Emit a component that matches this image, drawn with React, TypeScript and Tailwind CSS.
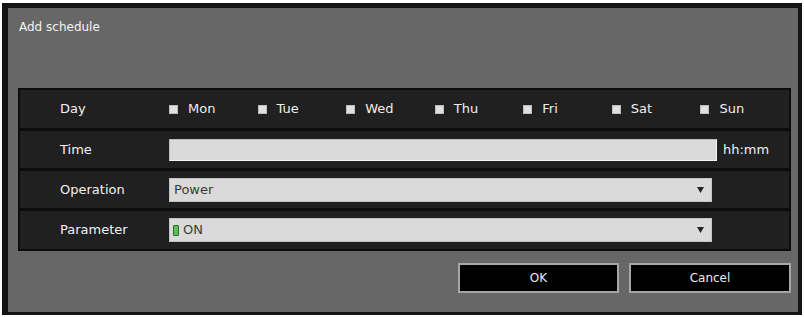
import { ReactNode } from "react";

const DAYS = ["Mon", "Tue", "Wed", "Thu", "Fri", "Sat", "Sun"];

function Row({ label, h, children }: { label: string; h: string; children: ReactNode }) {
    return (
        <div className={`flex items-center bg-[#202020] ${h}`}>
            <div className="w-[149px] shrink-0 pl-[40px] text-[13px] text-[#f2f2f2]">{label}</div>
            <div className="flex flex-1 items-center">{children}</div>
        </div>
    );
}

function Arrow() {
    return (
        <svg width="7" height="6" viewBox="0 0 7 6" className="ml-auto mr-[7px]">
            <path d="M0 0 L7 0 L3.5 6 Z" fill="#222" />
        </svg>
    );
}

export default function App() {
    return (
        <div
            className="h-[317px] w-[804px] bg-white pl-[2px] pt-[3px]"
            style={{ fontFamily: '"DejaVu Sans", Verdana, sans-serif' }}
        >
            <div className="flex h-[312px] w-[800px] flex-col border-solid border-[#141414] border-b-[3px] border-l-[6px] border-r-[4px] border-t-[5px] bg-[#676767]">
                <div className="pl-[11px] pt-[12px] text-[12px] leading-[14px] text-[#f4f4f4]">Add schedule</div>

                <div className="ml-[10px] mr-[7px] mt-[54px] flex flex-col gap-[3px] bg-[#0c0c0c] p-[2px]">
                    <Row label="Day" h="h-[38px]">
                        <div className="grid flex-1 grid-cols-7">
                            {DAYS.map((d) => (
                                <div key={d} className="flex items-center gap-[10px]">
                                    <span className="h-[9px] w-[9px] border border-[#bdbdbd] bg-[#e0e0e0]" />
                                    <span className="text-[13px] text-[#eeeeee]">{d}</span>
                                </div>
                            ))}
                        </div>
                    </Row>
                    <Row label="Time" h="h-[37px]">
                        <div className="h-[22px] w-[548px] border border-[#bcbcbc] border-b-[#f4f4f4] border-r-[#f4f4f4] bg-[#dadada]" />
                        <span className="ml-[6px] text-[13px] text-[#f2f2f2]">hh:mm</span>
                    </Row>
                    <Row label="Operation" h="h-[37px]">
                        <div className="flex h-[24px] w-[543px] items-center border border-[#c4c4c4] bg-[#dadada] pl-[4px] text-[13px] text-[#3a3a3a]">
                            Power
                            <Arrow />
                        </div>
                    </Row>
                    <Row label="Parameter" h="h-[38px]">
                        <div className="flex h-[24px] w-[543px] items-center border border-[#c4c4c4] bg-[#dadada] pl-[3px] text-[13px] text-[#3a3a3a]">
                            <span className="mr-[4px] h-[11px] w-[6px] rounded-[1px] border border-[#2e6b2e] bg-[#5cbf5c]" />
                            ON
                            <Arrow />
                        </div>
                    </Row>
                </div>

                <div className="mr-[7px] mt-[12px] flex justify-end gap-[10px]">
                    <button className="h-[30px] w-[161px] border-2 border-[#a6a6a6] bg-black text-[12px] text-[#ececec]">
                        OK
                    </button>
                    <button className="h-[30px] w-[162px] border-2 border-[#a6a6a6] bg-black text-[12px] text-[#ececec]">
                        Cancel
                    </button>
                </div>
            </div>
        </div>
    );
}
